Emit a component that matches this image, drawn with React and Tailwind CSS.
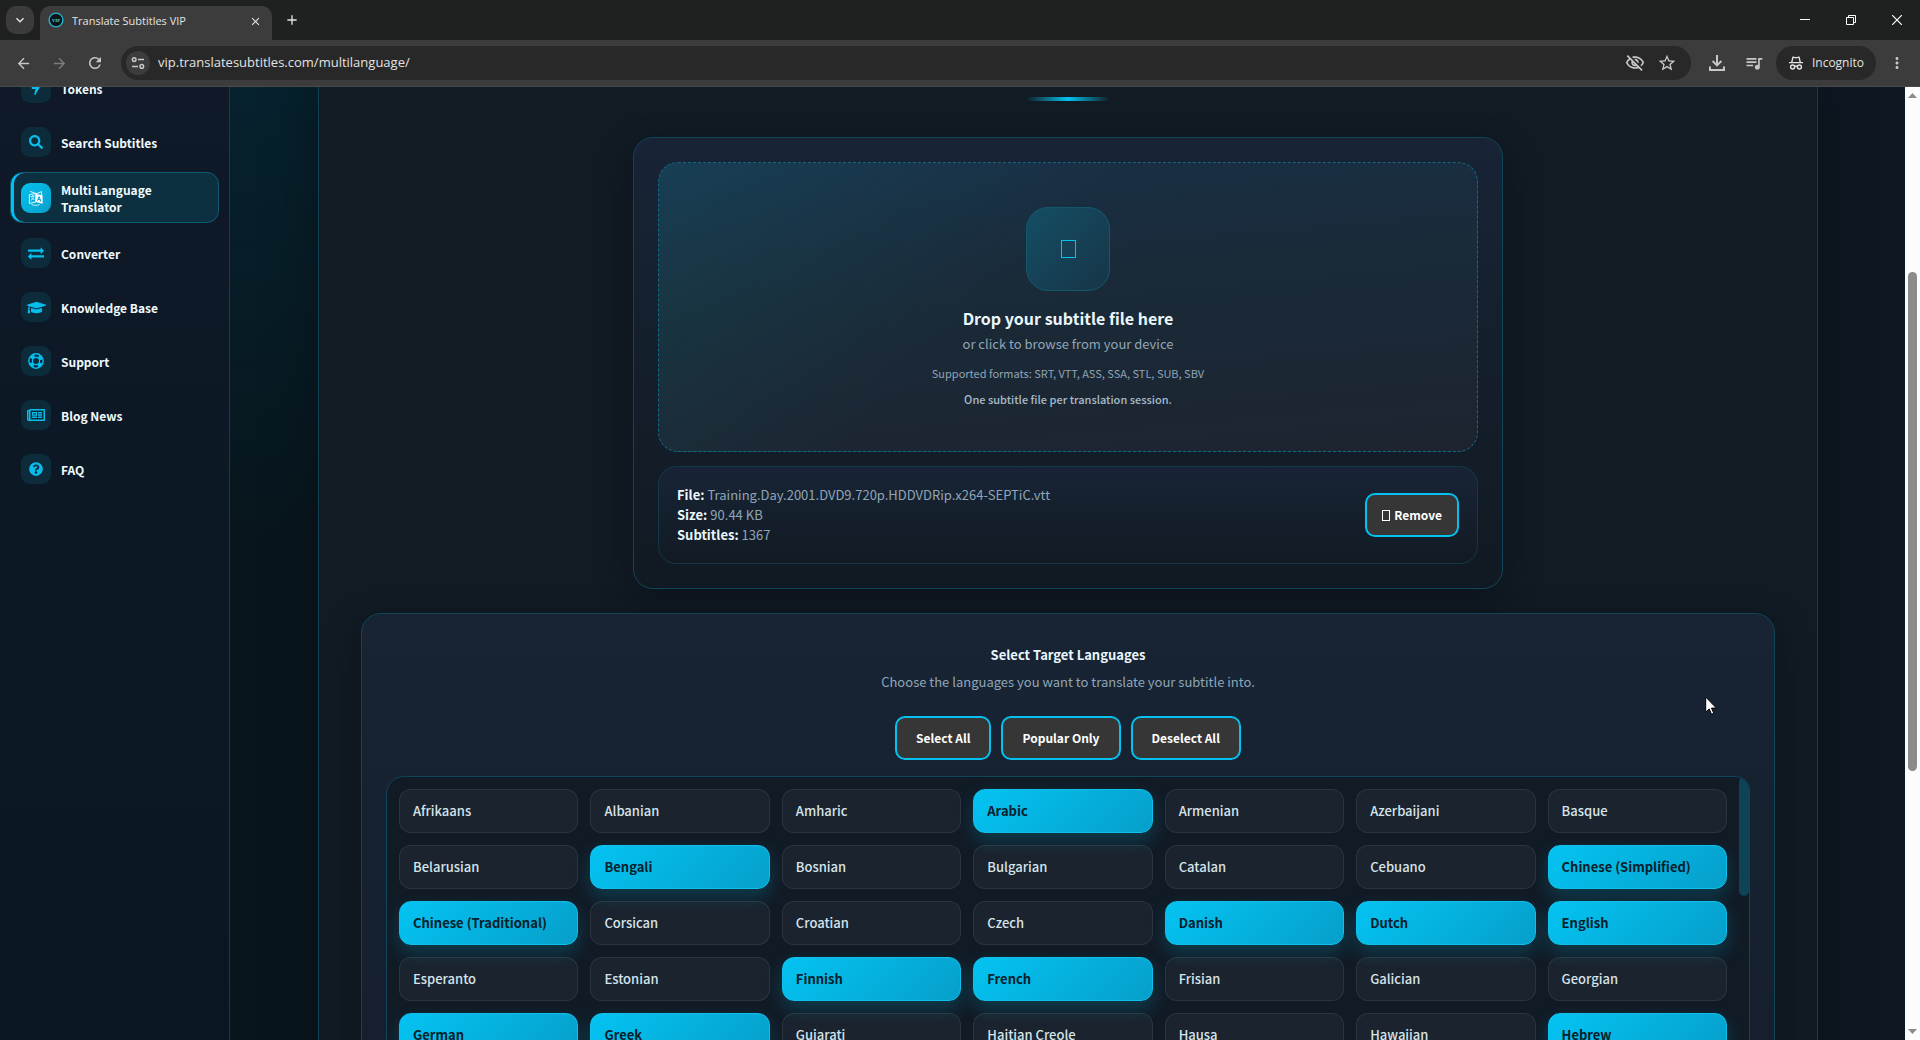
import { FaBolt, FaSearch, FaGraduationCap, FaRegNewspaper, FaQuestionCircle } from "react-icons/fa";
import { MdArrowBack, MdArrowForward, MdRefresh, MdOutlineVisibilityOff, MdStarBorder, MdQueueMusic, MdMoreVert, MdClose, MdAdd, MdKeyboardArrowDown } from "react-icons/md";

function ExchangeIcon() {
  return (
    <svg width="16" height="16" viewBox="0 0 1792 1792" fill="currentColor" aria-hidden="true">
      <path d="M1792 1184v192q0 13-9.5 22.5t-22.5 9.5h-1376v192q0 13-9.5 22.5t-22.5 9.5q-12 0-24-10l-319-320q-9-9-9-22 0-14 9-23l320-320q9-9 23-9 13 0 22.5 9.5t9.5 22.5v192h1376q13 0 22.5 9.5t9.5 22.5zm0-544q0 14-9 23l-320 320q-9 9-23 9-13 0-22.5-9.5t-9.5-22.5v-192h-1376q-13 0-22.5-9.5t-9.5-22.5v-192q0-13 9.5-22.5t22.5-9.5h1376v-192q0-14 9-23t23-9q12 0 24 10l319 319q9 9 9 23z" />
    </svg>
  );
}

function LifeRingIcon() {
  return (
    <svg width="16" height="16" viewBox="0 0 16 16" fill="none" stroke="currentColor" aria-hidden="true">
      <circle cx="8" cy="8" r="7.2" strokeWidth="1.4" />
      <circle cx="8" cy="8" r="3.6" strokeWidth="1.2" />
      <circle cx="8" cy="8" r="5.2" strokeWidth="3.4" strokeDasharray="4 4.17" strokeDashoffset="-2.08" />
    </svg>
  );
}

function LanguageIcon() {
  return (
    <svg width="16" height="16" viewBox="0 0 16 16" aria-hidden="true">
      <path d="M7.4 4.2 13.6 1.6v4" fill="none" stroke="#fff" strokeWidth=".9" />
      <path d="M7.8 3.8 14.6 5.4v8.4L7.8 12z" fill="#fff" />
      <path d="M1.4 4.6 7.8 3.4V12l-6.4 1.4z" fill="none" stroke="#fff" strokeWidth=".9" />
      <path d="M2 1.4 7.8 3.4M2.8 6.6l3.8-.8M4.6 5.2v1.2M5.8 6.2c-.4 1.9-1.4 3.3-2.8 4.1M3.4 7.6c.8 1.2 1.8 1.8 3 2" fill="none" stroke="#fff" strokeWidth=".8" />
      <path d="m9.4 10.8 1.7-4.2 1.8 5M10 9.4l2.4.5" fill="none" stroke="#08a4d2" strokeWidth="1" />
      <path d="M3.6 14.4c2 1.2 5 1.3 8 .2" fill="none" stroke="#fff" strokeWidth=".8" />
    </svg>
  );
}

function TuneIcon() {
  return (
    <svg width="14" height="14" viewBox="0 0 14 14" fill="none" stroke="currentColor" strokeWidth="1.5" aria-hidden="true">
      <circle cx="3.2" cy="3.6" r="1.8" />
      <path d="M7 3.6h6M1 10.4h6" />
      <circle cx="10.8" cy="10.4" r="1.8" />
    </svg>
  );
}

function DownloadIcon() {
  return (
    <svg width="18" height="18" viewBox="0 0 18 18" fill="none" stroke="currentColor" strokeWidth="2" aria-hidden="true">
      <path d="M9 1v10M4.6 7 9 11.4 13.4 7" />
      <path d="M2 12.5V16h14v-3.5" />
    </svg>
  );
}

function IncognitoIcon() {
  return (
    <svg width="16" height="16" viewBox="0 0 16 16" fill="none" stroke="currentColor" strokeWidth="1.4" aria-hidden="true">
      <path d="M1 7.6h14M3.7 7.4 5 2.2c.8 0 1.6.5 3 .5s2.2-.5 3-.5l1.3 5.2" />
      <circle cx="4.6" cy="12" r="2" />
      <circle cx="11.4" cy="12" r="2" />
      <path d="M6.6 11.6c.8-.6 2-.6 2.8 0" />
    </svg>
  );
}

function Browser() {
  return (
    <header className="shrink-0 font-['Open_Sans','Noto_Sans',sans-serif] text-[#e3e3e3]">
      <div className="flex h-10 items-end bg-[#1f2120]">
        <button aria-label="Search tabs" className="mb-1.5 ml-1.5 flex size-7 items-center justify-center rounded-[10px] bg-[#3b3b3b]">
          <MdKeyboardArrowDown size={16} />
        </button>
        <div className="ml-1.5 flex h-[34px] w-[232px] items-center rounded-t-[10px] bg-[#3c3c3c] pr-2.5 pl-2">
          <svg width="16" height="16" viewBox="0 0 16 16" className="mb-1.5 shrink-0" aria-hidden="true">
            <circle cx="8" cy="8" r="6.9" fill="#0b1418" stroke="#25b4d4" strokeWidth="1.4" />
            <text x="8" y="9.8" textAnchor="middle" fontSize="5" fontWeight="700" fontFamily="Liberation Serif, serif" fill="#4fd0ea">VIP</text>
          </svg>
          <span className="mb-1 ml-2 flex-1 text-[11px] leading-4">Translate Subtitles VIP</span>
          <button aria-label="Close tab" className="mb-1"><MdClose size={13} /></button>
        </div>
        <button aria-label="New tab" className="mb-3 ml-3"><MdAdd size={16} /></button>
        <div className="ml-auto flex h-10 items-center gap-9 pr-[18px] text-white">
          <button aria-label="Minimize">
            <svg width="10" height="10" viewBox="0 0 10 10" stroke="currentColor"><path d="M0 4.5h10" /></svg>
          </button>
          <button aria-label="Restore">
            <svg width="10" height="10" viewBox="0 0 10 10" fill="none" stroke="currentColor"><path d="M.5 2.5h7v7h-7zM2.5 2.5v-2h7v7h-2" /></svg>
          </button>
          <button aria-label="Close">
            <svg width="10" height="10" viewBox="0 0 10 10" stroke="currentColor" strokeWidth="1.2"><path d="M0 0l10 10M10 0L0 10" /></svg>
          </button>
        </div>
      </div>
      <div className="flex h-[47px] items-center border-b border-[#4a4a4a] bg-[#3c3c3c] text-[#c7c7c7]">
        <button aria-label="Back" className="ml-[15px]"><MdArrowBack size={17} /></button>
        <button aria-label="Forward" className="ml-[19px] text-[#7c7c7c]"><MdArrowForward size={17} /></button>
        <button aria-label="Reload" className="ml-[18px]"><MdRefresh size={18} /></button>
        <div className="ml-[17px] flex h-[34px] flex-1 items-center rounded-full bg-[#282828] pr-3.5 pl-[5px]">
          <button aria-label="Site information" className="flex size-6 items-center justify-center rounded-full bg-[#3c3c3c]"><TuneIcon /></button>
          <input aria-label="Address" defaultValue="vip.translatesubtitles.com/multilanguage/" className="ml-2 flex-1 bg-transparent text-[13px] text-[#e3e3e3] outline-none" />
          <button aria-label="Cookies blocked"><MdOutlineVisibilityOff size={20} /></button>
          <button aria-label="Bookmark" className="ml-3"><MdStarBorder size={20} /></button>
        </div>
        <button aria-label="Downloads" className="ml-[17px]"><DownloadIcon /></button>
        <button aria-label="Media" className="ml-[18px]"><MdQueueMusic size={20} /></button>
        <button className="ml-3 flex h-[34px] items-center gap-2 rounded-full bg-[#282828] px-3 text-[12px] text-[#e3e3e3]">
          <IncognitoIcon />
          Incognito
        </button>
        <button aria-label="Menu" className="mr-[14px] ml-3"><MdMoreVert size={18} /></button>
      </div>
    </header>
  );
}

const navItems = [
  { label: "Tokens", icon: <FaBolt size={14} /> },
  { label: "Search Subtitles", icon: <FaSearch size={14} /> },
  { label: "Multi Language Translator", icon: <LanguageIcon />, active: true },
  { label: "Converter", icon: <ExchangeIcon /> },
  { label: "Knowledge Base", icon: <FaGraduationCap size={19} /> },
  { label: "Support", icon: <LifeRingIcon /> },
  { label: "Blog News", icon: <FaRegNewspaper size={18} /> },
  { label: "FAQ", icon: <FaQuestionCircle size={14} /> },
];

function Sidebar() {
  return (
    <nav className="w-[230px] shrink-0 overflow-hidden border-r border-[#0e3f52] bg-linear-to-b from-[#0f1928] to-[#0a1722] px-2.5">
      <ul className="-mt-[23px] flex flex-col gap-1.5">
        {navItems.map((item) => (
          <li key={item.label}>
            <a
              href="#"
              className={
                item.active
                  ? "flex items-center gap-2.5 rounded-xl border border-[#0f5a70] bg-[#0d3040] px-2.5 pt-2 pb-[7px] shadow-[inset_3px_0_0_#00c2f0]"
                  : "flex items-center gap-2.5 rounded-xl border border-transparent px-2.5 py-2"
              }
            >
              <span
                className={
                  item.active
                    ? "flex size-[30px] shrink-0 items-center justify-center rounded-[9px] bg-linear-to-br from-[#05c1ef] to-[#08a0cb] text-white"
                    : "flex size-[30px] shrink-0 items-center justify-center rounded-[9px] bg-[#0d2c3b] text-[#06bdec]"
                }
              >
                {item.icon}
              </span>
              <span className="max-w-[110px] text-[12px] leading-[17px] font-bold text-[#f0fafd]">{item.label}</span>
            </a>
          </li>
        ))}
      </ul>
    </nav>
  );
}

function OutlineButton({ children, className }) {
  return (
    <button className={`flex h-11 items-center rounded-[10px] border-2 border-[#05c1ef] bg-[#363636] text-[12px] leading-5 font-bold text-white ${className}`}>
      {children}
    </button>
  );
}

function UploadPanel() {
  return (
    <section className="mx-auto w-[870px] max-w-full rounded-[20px] border border-[#0f4558] bg-linear-to-b from-[#182436] to-[#111a22] p-6 shadow-[0_14px_34px_rgba(8,10,24,0.35)]">
      <label className="flex cursor-pointer flex-col items-center rounded-[20px] border border-dashed border-[#106a84] bg-[linear-gradient(135deg,rgba(10,180,180,0.11),transparent_42%),linear-gradient(175deg,#193048,#1a2a38_45%,#1d2430)] pt-11 pb-[43px] text-center">
        <input type="file" className="hidden" />
        <span className="flex size-[84px] items-center justify-center rounded-[22px] border border-[#12586c] bg-linear-to-br from-[#134e64] to-[#173548]">
          <span className="h-[18px] w-[15px] border border-[#05c1ef]" />
        </span>
        <span className="mt-4 text-[16px] leading-[22px] font-bold text-[#eaf7fc]">Drop your subtitle file here</span>
        <span className="mt-[5px] text-[13px] leading-5 text-[#8fa6b7]">or click to browse from your device</span>
        <span className="mt-2.5 text-[11px] leading-[18px] text-[#8fa6b7]">Supported formats: SRT, VTT, ASS, SSA, STL, SUB, SBV</span>
        <span className="mt-2 text-[11px] leading-[18px] font-medium text-[#a6bccb]">One subtitle file per translation session.</span>
      </label>
      <div className="mt-3.5 flex items-center justify-between rounded-[18px] border border-[#123849] bg-linear-to-b from-[#182436] to-[#121b24] p-[18px]">
        <dl className="text-[13px] leading-5 text-[#8fa6b7]">
          <div className="flex gap-[3px]"><dt className="font-bold text-[#eaf7fc]">File:</dt><dd>Training.Day.2001.DVD9.720p.HDDVDRip.x264-SEPTiC.vtt</dd></div>
          <div className="flex gap-[3px]"><dt className="font-bold text-[#eaf7fc]">Size:</dt><dd>90.44 KB</dd></div>
          <div className="flex gap-[3px]"><dt className="font-bold text-[#eaf7fc]">Subtitles:</dt><dd>1367</dd></div>
        </dl>
        <OutlineButton className="gap-1 px-[15px]">
          <span className="h-[11px] w-2 border border-white" />
          Remove
        </OutlineButton>
      </div>
    </section>
  );
}

const languages = [
  "Afrikaans", "Albanian", "Amharic", "Arabic", "Armenian", "Azerbaijani", "Basque",
  "Belarusian", "Bengali", "Bosnian", "Bulgarian", "Catalan", "Cebuano", "Chinese (Simplified)",
  "Chinese (Traditional)", "Corsican", "Croatian", "Czech", "Danish", "Dutch", "English",
  "Esperanto", "Estonian", "Finnish", "French", "Frisian", "Galician", "Georgian",
  "German", "Greek", "Gujarati", "Haitian Creole", "Hausa", "Hawaiian", "Hebrew",
];
const selected = new Set([
  "Arabic", "Bengali", "Chinese (Simplified)", "Chinese (Traditional)", "Danish", "Dutch",
  "English", "Finnish", "French", "German", "Greek", "Hebrew",
]);

function LanguagePanel() {
  return (
    <section className="mt-6 rounded-[20px] border border-[#0f4558] bg-linear-to-b from-[#182434] to-[#141d2a] px-6 pt-[29px] pb-6 shadow-[0_14px_34px_rgba(8,10,24,0.35)]">
      <h2 className="text-center text-[13px] leading-6 font-bold text-[#eaf7fc]">Select Target Languages</h2>
      <p className="mt-[5px] text-center text-[13px] leading-5 text-[#8fa6b7]">Choose the languages you want to translate your subtitle into.</p>
      <div className="mt-6 flex justify-center gap-2.5">
        <OutlineButton className="px-[19px]">Select All</OutlineButton>
        <OutlineButton className="px-[19px]">Popular Only</OutlineButton>
        <OutlineButton className="px-[19px]">Deselect All</OutlineButton>
      </div>
      <div className="mt-4 flex h-[420px] overflow-hidden rounded-[18px] rounded-tr-[14px] border border-[#0f4558] bg-[#111b26]">
        <div className="grid flex-1 auto-rows-[44px] grid-cols-7 gap-3 p-3">
          {languages.map((name) => (
            <button
              key={name}
              aria-pressed={selected.has(name)}
              className={
                selected.has(name)
                  ? "rounded-xl border border-[#10c0ec] bg-linear-[135deg] from-[#04c3f2] to-[#069fca] px-[13px] text-left text-[13px] font-bold text-[#06202c] shadow-[0_8px_18px_rgba(5,193,239,0.2)]"
                  : "rounded-xl border border-white/8 bg-white/4 px-[13px] text-left text-[13px] font-medium text-[#d5e3eb]"
              }
            >
              {name}
            </button>
          ))}
        </div>
        <div className="w-2.5 shrink-0">
          <div className="h-[119px] rounded-full bg-[#0e4356]" />
        </div>
      </div>
    </section>
  );
}

export default function App() {
  return (
    <div className="relative flex h-screen flex-col overflow-hidden bg-[#0a141d]">
      <Browser />
      <div className="flex min-h-0 flex-1 font-['Noto_Sans_CJK_SC',sans-serif]">
        <Sidebar />
        <main className="min-w-0 flex-1 overflow-hidden bg-[radial-gradient(ellipse_at_top_left,#06222e,transparent_34%),linear-gradient(90deg,#08151c,#0e1822)] pr-[87px] pl-[88px]">
          <div className="h-[1200px] border-x border-[#0e3f52] bg-[#111b23] px-[42px] pt-2.5 shadow-[0_0_40px_rgba(10,16,20,0.7)]">
            <div className="mx-auto mb-9 h-1 w-[84px] rounded-full bg-linear-to-r from-transparent via-[#05c1ef] to-transparent" />
            <UploadPanel />
            <LanguagePanel />
          </div>
        </main>
        <div className="flex w-[15px] shrink-0 flex-col items-center bg-[#fcfcfc] py-1.5">
          <svg width="9" height="5" viewBox="0 0 9 5" fill="#8b8b8b" aria-hidden="true"><path d="M4.5 0 9 5H0z" /></svg>
          <div className="mt-[174px] h-[499px] w-[9px] rounded-full bg-[#8b8b8b]" />
          <svg className="mt-auto" width="9" height="5" viewBox="0 0 9 5" fill="#8b8b8b" aria-hidden="true"><path d="M4.5 5 0 0h9z" /></svg>
        </div>
      </div>
      <svg className="pointer-events-none absolute top-[696px] left-[1705px]" width="13" height="20" viewBox="0 0 13 20" aria-hidden="true">
        <path d="M.7 1v15.2l3.5-3.3 2.3 5.4 2.3-1-2.3-5.2h4.9z" fill="#fff" stroke="#000" strokeWidth="1" />
      </svg>
    </div>
  );
}
